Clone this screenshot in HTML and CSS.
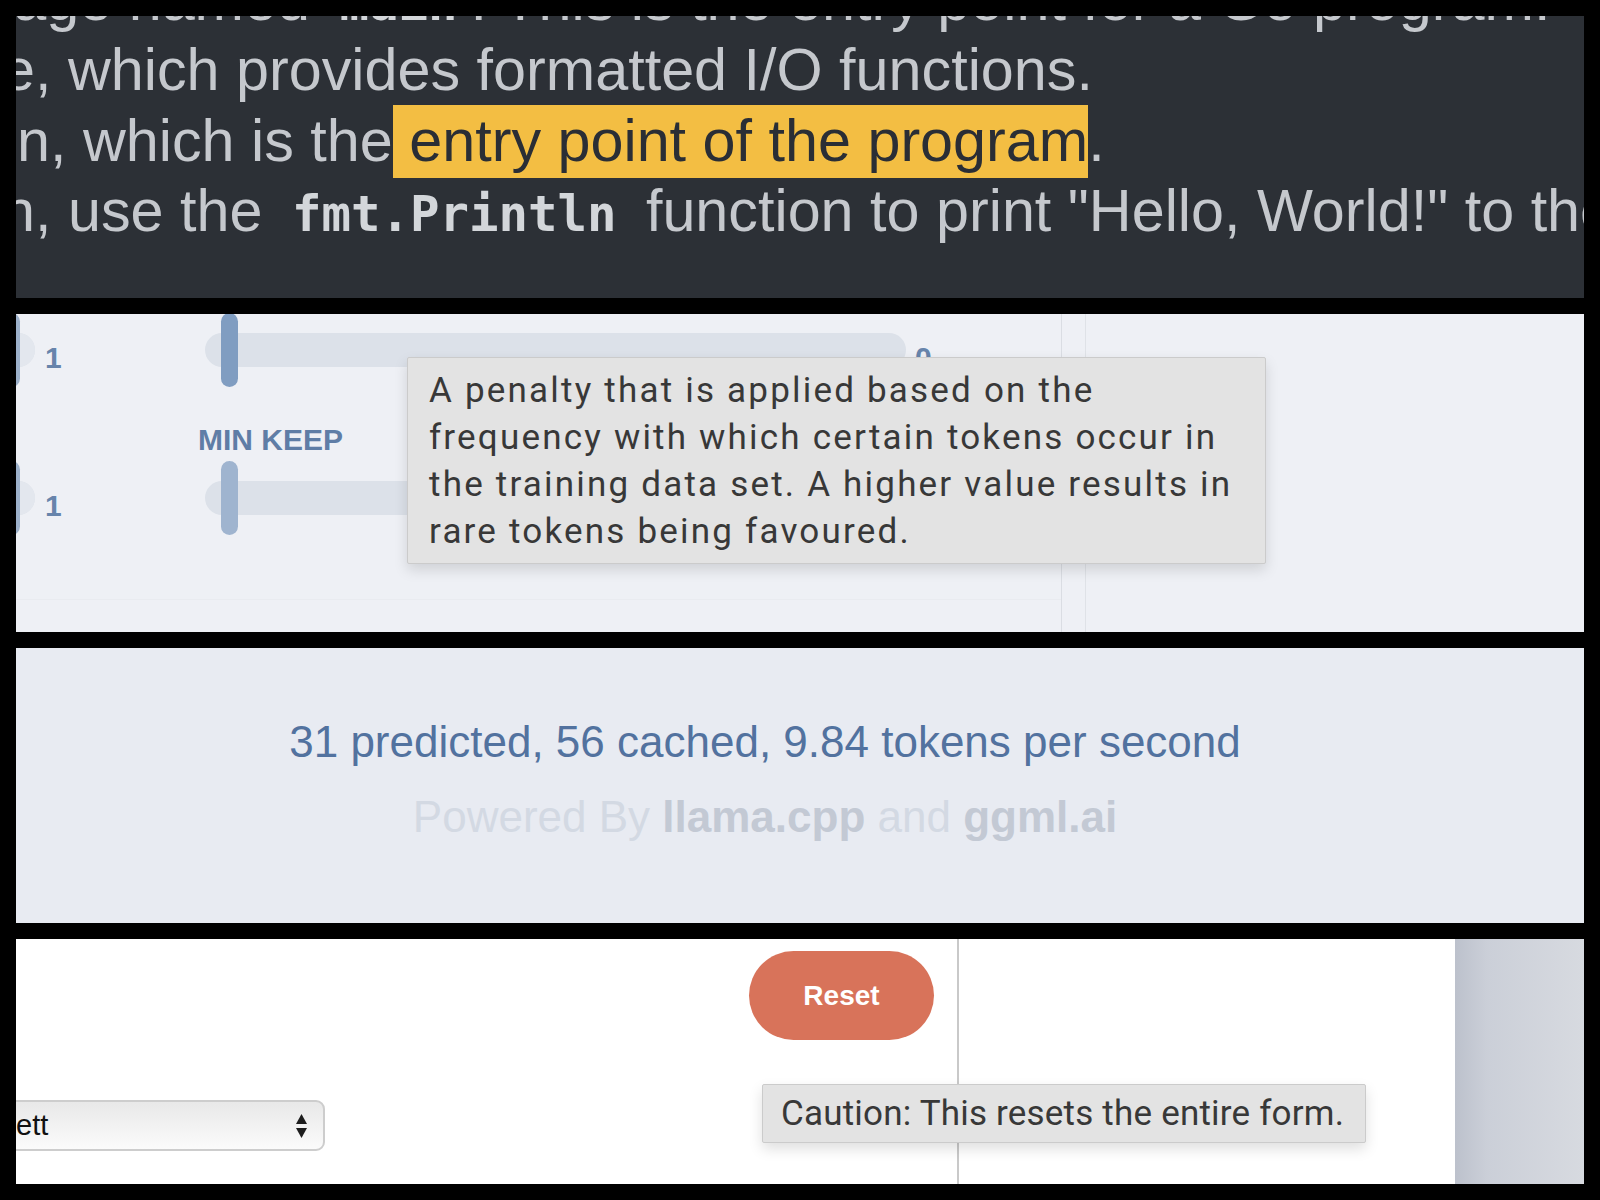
FILE: index.html
```html
<!DOCTYPE html>
<html lang="en">
<head>
<meta charset="utf-8">
<title>llama.cpp chat</title>
<link rel="stylesheet" href="styles.css">
</head>
<body>
  <section class="panel p1">
    <div class="answer">
      <div class="line l1">package named <code>main</code>. This is the entry point for a Go program.</div>
      <div class="line l2">e, which provides formatted I/O functions.</div>
      <div class="line l3">n, which is the<mark> entry point of the program</mark>.</div>
      <div class="line l4">n, use the <code>fmt.Println</code> function to print "Hello, World!" to the console.</div>
    </div>
  </section>

  <section class="panel p2">
    <div class="form">
      <div class="cols">
        <div class="col col1">
          <div class="field">
            <div class="label">TOP K</div>
            <div class="slider">
              <div class="track"><span class="fill"></span><span class="thumb at-max"></span></div>
              <span class="val">1</span>
            </div>
          </div>
          <div class="field">
            <div class="label">TFS Z</div>
            <div class="slider">
              <div class="track"><span class="fill"></span><span class="thumb at-max soft"></span></div>
              <span class="val">1</span>
            </div>
          </div>
        </div>
        <div class="col col2">
          <div class="field">
            <div class="label">FREQUENCY PENALTY</div>
            <div class="slider">
              <div class="track"><span class="thumb at-min"></span></div>
              <span class="val">0</span>
            </div>
          </div>
          <div class="field">
            <div class="label">MIN KEEP</div>
            <div class="slider">
              <div class="track"><span class="thumb at-min soft"></span></div>
              <span class="val">0</span>
            </div>
          </div>
        </div>
      </div>
      <div class="hr"></div>
    </div>
    <div class="gutter"></div>
    <div class="rest"></div>
    <div class="tip tip1">A penalty that is applied based on the<br>frequency with which certain tokens occur in<br>the training data set. A higher value results in<br>rare tokens being favoured.</div>
  </section>

  <section class="panel p3">
    <div class="stats">31 predicted, 56 cached, 9.84 tokens per second</div>
    <div class="powered">Powered By <b>llama.cpp</b> and <b>ggml.ai</b></div>
  </section>

  <section class="panel p4">
    <div class="p4-form">
      <button class="reset" type="button">Reset</button>
      <div class="select">
        <span class="sel-text">ett</span>
        <svg class="sel-arrows" width="11" height="24" viewBox="0 0 11 24"><polygon points="0,10 5.5,0 11,10" fill="#1d1d1d"/><polygon points="0,14 11,14 5.5,24" fill="#1d1d1d"/></svg>
      </div>
    </div>
    <div class="vline"></div>
    <div class="p4-space"></div>
    <div class="desk"></div>
    <div class="tip tip2">Caution: This resets the entire form.</div>
  </section>
</body>
</html>
```

FILE: styles.css
```css
html, body {
  margin: 0;
  background: #000;
}

body {
  padding: 16px;
  display: flex;
  flex-direction: column;
  gap: 16px;
  font-family: "Liberation Sans", Arial, sans-serif;
}

.panel {
  position: relative;
  overflow: hidden;
  flex: none;
}

/* ---------- panel 1 : dark answer text ---------- */
.p1 {
  height: 282px;
  background: #2c3036;
  color: #c5c8cd;
  font-size: 59.3px;
  line-height: 70.5px;
  white-space: nowrap;
}

.answer {
  margin-top: -51.5px;
}

.l1 { margin-left: -128px; }
.l2 { margin-left: -14px; }
.l3 { margin-left: 1px; }
.l4 { margin-left: -14px; }

.p1 code {
  font-family: "DejaVu Sans Mono", "Liberation Mono", monospace;
  font-weight: bold;
  font-size: 49px;
  line-height: 1;
  padding: 0 13px;
  color: #d3d6da;
}

.p1 mark {
  background: #f3be43;
  color: #2a2e35;
  padding: 2px 0 4px;
}

/* ---------- panel 2 : sliders ---------- */
.p2 {
  height: 318px;
  background: #eef0f5;
  display: flex;
}

.form {
  width: 1045px;
  flex: none;
  border-right: 1px solid #dadde3;
  display: flex;
  flex-direction: column;
}

.cols {
  display: flex;
  margin-top: -40px;
}

.col {
  display: flex;
  flex-direction: column;
  gap: 35px;
}

.col1 {
  margin-left: -300px;
  width: 346px;
}

.col2 {
  margin-left: 136px;
  width: 760px;
}

.label {
  font-size: 30px;
  font-weight: bold;
  line-height: 36px;
  color: #5f7da6;
  margin-bottom: 3px;
  white-space: nowrap;
}

.slider {
  height: 74px;
  display: flex;
  align-items: center;
  gap: 10px;
}

.col2 .slider {
  padding-left: 7px;
  gap: 9px;
}

.track {
  position: relative;
  height: 34px;
  border-radius: 17px;
  background: #dce1e9;
  flex: none;
}

.col1 .track { width: 319px; }
.col2 .track { width: 701px; }

.fill {
  display: block;
  height: 100%;
  border-radius: 17px;
  background: #e3e7ee;
}

.thumb {
  position: absolute;
  top: -20px;
  width: 17px;
  height: 74px;
  border-radius: 9px;
  background: #809dc1;
}

.thumb.soft { background: #9fb4cf; }
.col1 .thumb { background: #9cb0ca; }
.thumb.at-min { left: 16px; }
.thumb.at-max { right: 15px; }

.val {
  font-size: 30px;
  font-weight: bold;
  line-height: 34px;
  padding-top: 16px;
  color: #6784ab;
}

.hr {
  margin-top: 64px;
  height: 1px;
  background: #e9ebf0;
}

.gutter {
  width: 23px;
  flex: none;
  border-right: 1px solid #dfe2e7;
}

.rest { flex: 1; }

/* ---------- tooltips ---------- */
.tip {
  position: absolute;
  box-sizing: border-box;
  background: #e3e3e3;
  border: 1px solid #cbcbcb;
  border-radius: 2px;
  box-shadow: 0 6px 14px rgba(0, 0, 0, 0.13);
  color: #383838;
  font-family: Roboto, "Liberation Sans", sans-serif;
  font-size: 35px;
  line-height: 47px;
  white-space: nowrap;
}

.tip1 {
  left: 391px;
  top: 43px;
  width: 859px;
  height: 207px;
  padding: 9px 20px 9px 21px;
  letter-spacing: 2.2px;
}

.tip2 {
  left: 746px;
  top: 145px;
  width: 604px;
  height: 59px;
  padding: 5px 18px 5px 18px;
  letter-spacing: 0.2px;
}

/* ---------- panel 3 : stats ---------- */
.p3 {
  height: 275px;
  box-sizing: border-box;
  background: #e8ebf2;
  padding: 56px 70px 0 0;
  text-align: center;
  font-size: 44px;
  line-height: 75px;
  white-space: nowrap;
}

.stats { color: #52729f; }
.powered { color: #d3d9e3; }
.powered b { color: #c3c9d4; }

/* ---------- panel 4 : reset / select ---------- */
.p4 {
  height: 245px;
  background: #fff;
  display: flex;
}

.p4-form {
  width: 941px;
  flex: none;
  display: flex;
  flex-direction: column;
}

.reset {
  align-self: flex-end;
  margin: 12px 23px 0 0;
  width: 185px;
  height: 89px;
  border: none;
  border-radius: 45px;
  background: #d8735a;
  color: #fff;
  font-family: "Liberation Sans", Arial, sans-serif;
  font-weight: bold;
  font-size: 28px;
  padding: 0;
}

.select {
  margin: 60px 0 0 -100px;
  width: 409px;
  height: 51px;
  box-sizing: border-box;
  border: 2px solid #cdcdcd;
  border-radius: 9px;
  background: linear-gradient(#e8e8e8, #fbfbfb);
  display: flex;
  align-items: center;
  justify-content: space-between;
  padding: 0 16px 0 98px;
  font-size: 29px;
  color: #111;
}

.sel-arrows { display: block; }

.vline {
  width: 2px;
  flex: none;
  background: #c9c9c9;
}

.p4-space { flex: 1; }

.desk {
  width: 129px;
  flex: none;
  background: linear-gradient(90deg, #bcc1cc 0%, #cbcfd8 25%, #d7dae0 100%);
}
```
